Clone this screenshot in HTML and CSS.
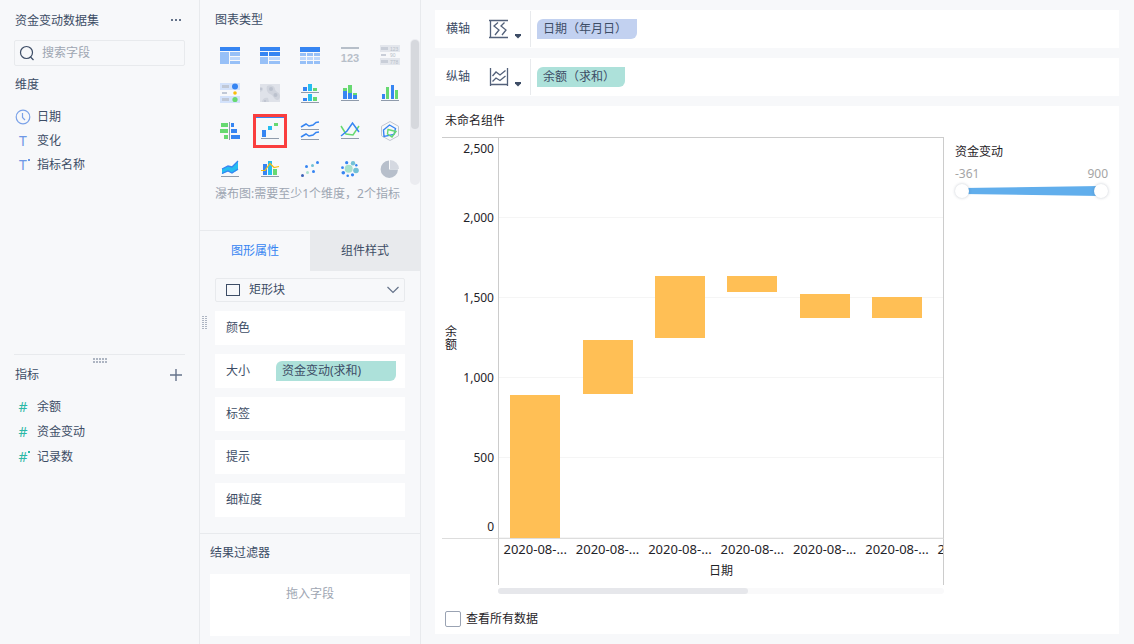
FILE: index.html
```html
<!DOCTYPE html>
<html lang="zh-CN">

<head>
    <meta charset="UTF-8">
    <meta name="viewport" content="width=device-width, initial-scale=1.0">
    <title>未命名组件</title>
    <link rel="stylesheet" href="styles.css">
</head>

<body>

    <!-- 左侧字段面板 -->
    <aside class="fields-panel">
        <section class="dimension-area">
            <div class="panel-head">
                <h2>资金变动数据集</h2>
                <button class="icon-btn" aria-label="更多">
                    <svg width="12" height="12" viewBox="0 0 12 12" fill="#65738a">
                        <rect x="1" y="4" width="2" height="2" />
                        <rect x="5" y="4" width="2" height="2" />
                        <rect x="9" y="4" width="2" height="2" />
                    </svg>
                </button>
            </div>
            <label class="search-box">
                <svg width="16" height="16" viewBox="0 0 16 16" fill="none" stroke="#3d4d66" stroke-width="1.2">
                    <circle cx="7.5" cy="7.5" r="6" />
                    <path d="M11.5 12l3 3" />
                </svg>
                <input type="text" placeholder="搜索字段" aria-label="搜索字段">
            </label>
            <h3>维度</h3>
            <ul class="field-list">
                <li>
                    <svg width="16" height="16" viewBox="0 0 16 16" fill="none" stroke="#7ba2e8" stroke-width="1.2">
                        <circle cx="8" cy="8" r="6.8" />
                        <path d="M7.5 4v4.5l2.500 2.500" />
                    </svg>
                    日期
                </li>
                <li><span class="type-mark">T</span>变化</li>
                <li><span class="type-mark dotted">T</span>指标名称</li>
            </ul>
        </section>

        <section class="measure-area">
            <svg class="grip-h" width="14" height="5" viewBox="0 0 14 5" stroke="#65738a" stroke-dasharray="2 1">
                <path d="M0 1h14M0 4h14" />
            </svg>
            <div class="panel-head">
                <h2>指标</h2>
                <button class="icon-btn" aria-label="添加指标">
                    <svg width="12" height="12" viewBox="0 0 12 12" stroke="#65738a" stroke-width="1.4">
                        <path d="M0 6h12M6 0v12" />
                    </svg>
                </button>
            </div>
            <ul class="field-list measures">
                <li><span class="type-mark">#</span>余额</li>
                <li><span class="type-mark">#</span>资金变动</li>
                <li><span class="type-mark dotted">#</span>记录数</li>
            </ul>
        </section>
    </aside>

    <!-- 中间配置面板 -->
    <section class="config-panel">
        <div class="chart-types">
            <h2>图表类型</h2>
            <div class="type-scroll">
                <div class="type-grid">
                    <button aria-label="分组表">
                        <svg viewBox="0 0 20 20">
                            <path fill="#3685f2" d="M0 2h20v4H0z" />
                            <path fill="#97c0f7" d="M0 7h9v12H0zM10 7h10v4H10zM10 16h10v3H10z" />
                            <path fill="#bdd7fb" d="M10 12h10v3H10z" />
                        </svg>
                    </button>
                    <button aria-label="交叉表">
                        <svg viewBox="0 0 20 20">
                            <path fill="#3685f2" d="M0 2h20v4H0zM0 7h8v4H0zM9 7h11v4H9z" />
                            <path fill="#97c0f7" d="M0 12h8v7H0zM9 16h11v3H9z" />
                            <path fill="#bdd7fb" d="M9 12h11v3H9z" />
                        </svg>
                    </button>
                    <button aria-label="明细表">
                        <svg viewBox="0 0 20 20">
                            <path fill="#3685f2" d="M0 2h20v5H0z" />
                            <path fill="#97c0f7" d="M0 8h6v3H0zM7 8h6v3H7zM14 8h6v3h-6zM0 16h6v3H0zM7 16h6v3H7zM14 16h6v3h-6z" />
                            <path fill="#bdd7fb" d="M0 12h6v3H0zM7 12h6v3H7zM14 12h6v3h-6z" />
                        </svg>
                    </button>
                    <button aria-label="KPI指标卡">
                        <svg viewBox="0 0 20 20">
                            <path fill="#b7bfc9" d="M1 2h18v2H1z" />
                            <text class="kpi-text" x="10" y="17" text-anchor="middle">123</text>
                        </svg>
                    </button>
                    <button aria-label="颜色表格">
                        <svg viewBox="0 0 20 20">
                            <path fill="#e3e6ec" d="M0 0h20v7H0zM0 13h20v7H0z" />
                            <path fill="#c9ced8" d="M1 2h7v3H1zM1 9h5v2H1zM1 15h7v3H1z" />
                            <text class="tiny-text" x="10" y="6">123</text>
                            <text class="tiny-text" x="10" y="12">90</text>
                            <text class="tiny-text" x="10" y="19">778</text>
                        </svg>
                    </button>

                    <button aria-label="图标表格">
                        <svg viewBox="0 0 20 20">
                            <path fill="#d3e2fb" d="M0 0h20v7H0zM0 13h20v7H0z" />
                            <path fill="#c0c8d6" d="M2 2h7v3H2zM2 9h5v2H2zM2 15h7v3H2z" />
                            <circle cx="15" cy="3.500" r="3" fill="#3685f2" />
                            <circle cx="15" cy="10" r="1.800" fill="#f9bc0c" />
                            <circle cx="15" cy="16.500" r="2.600" fill="#67d971" />
                        </svg>
                    </button>
                    <button aria-label="热力区域图">
                        <svg viewBox="0 0 20 20">
                            <path fill="#dfe2e9" d="M0 1h20v18H0z" />
                            <g fill="#d0d4dd">
                                <path d="M7 3c3-2 8 0 8 3s5 3 5 7-3 5-5 3-2-4-5-5-4-5-3-8z" />
                                <path d="M0 4c3 0 4 2 2 4L0 9zM2 19c0-3 3-5 6-4l1 4z" />
                            </g>
                            <g fill="#bcc2ce">
                                <circle cx="11" cy="6" r="2" />
                                <circle cx="15.500" cy="12" r="2" />
                                <circle cx="5" cy="18" r="1" />
                                <circle cx="1" cy="6" r="1" />
                            </g>
                        </svg>
                    </button>
                    <button aria-label="分区柱形图">
                        <svg viewBox="0 0 20 20">
                            <path fill="#3685f2" d="M3 4h4v4H3zM3 15h4v3H3z" />
                            <path fill="#25bdf0" d="M8 1h4v7H8zM8 11h4v7H8z" />
                            <path fill="#67d971" d="M13 5h4v3h-4zM13 14h4v4h-4z" />
                            <path fill="#8f9bab" d="M1 9h18v1H1zM1 19h18v1H1z" />
                        </svg>
                    </button>
                    <button aria-label="堆积柱形图">
                        <svg viewBox="0 0 20 20">
                            <path fill="#67d971" d="M3 5h4v3H3zM8 2h4v8H8zM13 10h4v2h-4z" />
                            <path fill="#3685f2" d="M3 8h4v8H3zM8 10h4v6H8zM13 12h4v4h-4z" />
                            <path fill="#8f9bab" d="M1 17h18v1H1z" />
                        </svg>
                    </button>
                    <button aria-label="多系列柱形图">
                        <svg viewBox="0 0 20 20">
                            <path fill="#3685f2" d="M2 11h3v5H2zM11 2h3v14h-3z" />
                            <path fill="#67d971" d="M6 4h3v12H6zM15 7h3v9h-3z" />
                            <path fill="#8f9bab" d="M1 17h18v1H1z" />
                        </svg>
                    </button>

                    <button aria-label="对比柱状图">
                        <svg viewBox="0 0 20 20">
                            <path fill="#67d971" d="M1 2h7v4H1zM0 8h8v4H0zM4 14h4v4H4z" />
                            <path fill="#3685f2" d="M11 2h3v4h-3zM11 8h6v4h-6zM11 14h9v4h-9z" />
                            <path fill="#8f9bab" d="M9 1h1v18H9z" />
                        </svg>
                    </button>
                    <button class="active" aria-label="瀑布图">
                        <svg viewBox="0 0 20 20">
                            <path fill="#3685f2" d="M2 9h4v7H2z" />
                            <path fill="#25bdf0" d="M8 5h4v4H8z" />
                            <path fill="#67d971" d="M14 2h4v3h-4z" />
                            <path fill="#8f9bab" d="M1 17h18v1H1z" />
                        </svg>
                    </button>
                    <button aria-label="分区折线图">
                        <svg viewBox="0 0 20 20">
                            <path fill="none" stroke="#3685f2" stroke-width="1.500" d="M1 6l5-3 3 2 4-1 3-2.500 3-.500M1 16l5-3 3 2 4-1 3-2.500 3-.500" />
                            <path fill="#8f9bab" d="M1 8h18v1H1zM1 18h18v1H1z" />
                        </svg>
                    </button>
                    <button aria-label="多系列折线图">
                        <svg viewBox="0 0 20 20">
                            <path fill="none" stroke="#67d971" stroke-width="1.500" d="M1 5l5 8 7 1 6-9" />
                            <path fill="none" stroke="#3685f2" stroke-width="1.500" d="M1 15l6-5 5.500-8L19 11" />
                            <path fill="#8f9bab" d="M1 17h18v1H1z" />
                        </svg>
                    </button>
                    <button aria-label="雷达图">
                        <svg viewBox="0 0 20 20" fill="none">
                            <path stroke="#c0c6d0" d="M10 .5l8.500 4.800v9.500L10 19.500l-8.500-4.700V5.300z" />
                            <path stroke="#3685f2" stroke-width="1.400" d="M9.500 4l6 3.500-1.500 6-10 2L3.500 9z" />
                            <path stroke="#67d971" stroke-width="1.400" d="M8 8.500l8 2-4 5.500-4.500-3z" />
                        </svg>
                    </button>

                    <button aria-label="面积图">
                        <svg viewBox="0 0 20 20">
                            <path fill="#25bdf0" d="M2 10l6-3 4 1 6-6v9l-6 3-4-2-6 3z" />
                            <path fill="none" stroke="#3685f2" stroke-width="1.300" d="M2 10l6-3 4 1 6-6M2 14.500l6-2.500 4 2 6-4" />
                            <path fill="#8f9bab" d="M1 17h18v1H1z" />
                        </svg>
                    </button>
                    <button aria-label="组合图">
                        <svg viewBox="0 0 20 20">
                            <path fill="#3685f2" d="M3 5h4v11H3z" />
                            <path fill="#25bdf0" d="M8 2h4v14H8z" />
                            <path fill="#67d971" d="M13 10h4v6h-4z" />
                            <path fill="none" stroke="#f9bc0c" stroke-width="1.200" d="M1 11.500l4 0 5-7 4 4 5-1" />
                            <path fill="#8f9bab" d="M1 17h18v1H1z" />
                        </svg>
                    </button>
                    <button aria-label="散点图">
                        <svg viewBox="0 0 20 20">
                            <g fill="#3685f2">
                                <circle cx="17.500" cy="3.500" r="1.500" />
                                <circle cx="6.500" cy="7.500" r="1.500" />
                                <circle cx="13.500" cy="12.500" r="1.500" />
                            </g>
                            <circle cx="12.500" cy="6.500" r="1.500" fill="#72c1d6" />
                            <circle cx="7.500" cy="13.500" r="1.500" fill="#a8e0cc" />
                            <circle cx="2.500" cy="16.500" r="1.500" fill="#3c62b8" />
                        </svg>
                    </button>
                    <button aria-label="聚合气泡图">
                        <svg viewBox="0 0 20 20">
                            <circle cx="8.700" cy="9.700" r="4" fill="#a8e0cc" />
                            <g fill="#72c1d6">
                                <circle cx="13" cy="4.200" r="2.200" />
                                <circle cx="16" cy="11.500" r="2.800" />
                            </g>
                            <g fill="#3685f2">
                                <circle cx="6.700" cy="3.700" r="1.600" />
                                <circle cx="16.300" cy="6.300" r="1.200" />
                                <circle cx="2.500" cy="8.700" r="1.400" />
                                <circle cx="3.300" cy="13.700" r="1.800" />
                                <circle cx="7.700" cy="16.700" r="1.300" />
                                <circle cx="12.500" cy="15.800" r="1.600" />
                            </g>
                        </svg>
                    </button>
                    <button aria-label="饼图">
                        <svg viewBox="0 0 20 20">
                            <path fill="#b7bfcb" d="M9 1.500a8.700 8.700 0 1 0 9 9H9z" />
                            <path fill="#d5d9e1" d="M10 1v9h9a9 9 0 0 0-9-9z" />
                        </svg>
                    </button>
                </div>
                <div class="v-scroll"><div class="v-thumb"></div></div>
            </div>
            <p class="type-tip">瀑布图:需要至少1个维度，2个指标</p>
        </div>

        <div class="properties">
            <div class="tabs">
                <button class="tab current">图形属性</button>
                <button class="tab">组件样式</button>
            </div>
            <svg class="grip-v" width="5" height="13" viewBox="0 0 5 13" stroke="#65738a" stroke-dasharray="1 1">
                <path d="M1 0v13M4 0v13" />
            </svg>
            <div class="property-list">
                <label class="shape-select">
                    <svg width="16" height="14" viewBox="0 0 16 14" fill="none" stroke="#3d4d66">
                        <rect x="1.500" y="1.500" width="13" height="11" />
                    </svg>
                    <select aria-label="图形">
                        <option>矩形块</option>
                    </select>
                    <svg class="chevron" width="12" height="8" viewBox="0 0 12 8" fill="none" stroke="#65738a" stroke-width="1.200">
                        <path d="M.5 1L6 6.500 11.500 1" />
                    </svg>
                </label>
                <div class="property">颜色</div>
                <div class="property">大小<span class="pill measure wide">资金变动(求和)</span></div>
                <div class="property">标签</div>
                <div class="property">提示</div>
                <div class="property">细粒度</div>
            </div>
        </div>

        <div class="result-filter">
            <h2>结果过滤器</h2>
            <div class="drop-zone">拖入字段</div>
        </div>
    </section>

    <!-- 右侧图表区 -->
    <main class="workspace">
        <div class="axis-row">
            <span class="axis-name">横轴</span>
            <button class="axis-btn" aria-label="横轴设置">
                <svg width="20" height="20" viewBox="0 0 20 20" fill="none" stroke="#53617a" stroke-width="1.300">
                    <path d="M0 1.500h19M0 18.500h19M1.500 1v18" />
                    <path d="M9 3.500L5 7l5 4-4 5M15.500 3.500L12 7l5 4-4 5" />
                </svg>
                <svg width="8" height="5" viewBox="0 0 8 5" fill="#3d4d66"><path d="M1 0h6v1.500L4 4.500 1 1.500z" /></svg>
            </button>
            <div class="axis-fields"><span class="pill dimension">日期（年月日）</span></div>
        </div>
        <div class="axis-row">
            <span class="axis-name">纵轴</span>
            <button class="axis-btn" aria-label="纵轴设置">
                <svg width="20" height="20" viewBox="0 0 20 20" fill="none" stroke="#53617a" stroke-width="1.300">
                    <path d="M1.500 1v18M18.500 1v18M1 17.500h18" />
                    <path d="M3.500 9L7 5l4 3 5.500-4.500M3.500 14.500L7 11l4 2.500L16.500 9" />
                </svg>
                <svg width="8" height="5" viewBox="0 0 8 5" fill="#3d4d66"><path d="M1 0h6v1.500L4 4.500 1 1.500z" /></svg>
            </button>
            <div class="axis-fields"><span class="pill measure">余额（求和）</span></div>
        </div>

        <section class="component">
            <h1>未命名组件</h1>
            <div class="component-body">
                <div class="chart">
                    <div class="y-axis">
                        <span class="y-title">余额</span>
                        <div class="y-labels">
                            <span>2,500</span>
                            <span>2,000</span>
                            <span>1,500</span>
                            <span>1,000</span>
                            <span>500</span>
                            <span>0</span>
                        </div>
                    </div>
                    <!-- 每列三段：上方空白 / 柱体 / 下方空白 -->
                    <div class="plot">
                        <div class="column" style="grid-template-rows: 1606fr 894fr 0fr"><div class="bar"></div></div>
                        <div class="column" style="grid-template-rows: 1262fr 338fr 900fr"><div class="bar"></div></div>
                        <div class="column" style="grid-template-rows: 862fr 388fr 1250fr"><div class="bar"></div></div>
                        <div class="column" style="grid-template-rows: 862fr 100fr 1538fr"><div class="bar"></div></div>
                        <div class="column" style="grid-template-rows: 975fr 150fr 1375fr"><div class="bar"></div></div>
                        <div class="column" style="grid-template-rows: 994fr 131fr 1375fr"><div class="bar"></div></div>
                    </div>
                    <div class="axis-corner"></div>
                    <div class="x-axis">
                        <div class="x-labels">
                            <span>2020-08-...</span>
                            <span>2020-08-...</span>
                            <span>2020-08-...</span>
                            <span>2020-08-...</span>
                            <span>2020-08-...</span>
                            <span>2020-08-...</span>
                            <span>2020-08-...</span>
                        </div>
                        <div class="x-title">日期</div>
                    </div>
                    <div class="h-scroll"><div class="h-thumb"></div></div>
                </div>

                <div class="legend">
                    <div class="legend-title">资金变动</div>
                    <div class="legend-range"><span>-361</span><span>900</span></div>
                    <div class="range-slider">
                        <div class="range-track"></div>
                        <input type="range" min="-361" max="900" value="-361" aria-label="资金变动最小值">
                        <input type="range" min="-361" max="900" value="900" step="any" aria-label="资金变动最大值">
                    </div>
                </div>
            </div>
            <label class="view-all"><input type="checkbox">查看所有数据</label>
        </section>
    </main>

</body>

</html>
```
FILE: styles.css
```css
/* 通用样式 */
* {
    box-sizing: border-box;
}

body,
html {
    margin: 0;
    padding: 0;
    height: 100%;
}

body {
    display: flex;
    background-color: #f7f8fa;
    color: #3d4d66;
    font-family: "Noto Sans", "Noto Sans CJK SC", sans-serif;
    font-size: 12px;
    line-height: 22px;
}

h1,
h2,
h3,
p,
ul {
    margin: 0;
    padding: 0;
    font-size: 12px;
    font-weight: normal;
}

button,
input,
select {
    margin: 0;
    padding: 0;
    border: none;
    background: none;
    color: inherit;
    font: inherit;
}

button {
    cursor: pointer;
}

svg {
    display: block;
    flex: none;
}

/* 左侧字段面板 */
.fields-panel {
    display: flex;
    flex-direction: column;
    flex: none;
    width: 200px;
    padding: 0 14px;
    border-right: 1px solid #e8eaed;
}

.dimension-area {
    flex: 0 0 55%;
    padding-top: 10px;
}

.panel-head {
    display: flex;
    align-items: center;
    justify-content: space-between;
    padding: 0 3px 0 1px;
}

.icon-btn {
    display: flex;
}

.search-box {
    display: flex;
    align-items: center;
    gap: 7px;
    height: 26px;
    margin: 8px 0;
    padding: 0 4px;
    border: 1px solid #e8eaed;
    border-radius: 2px;
}

.search-box input {
    flex: 1;
    min-width: 0;
    outline: none;
}

.search-box input::placeholder {
    color: #9ea6b2;
}

.dimension-area h3 {
    padding-left: 1px;
}

.field-list {
    margin-top: 9px;
    padding-left: 1px;
    list-style: none;
}

.field-list li {
    display: flex;
    align-items: center;
    gap: 6px;
    height: 24px;
}

.field-list.measures {
    margin-top: 8px;
}

.field-list.measures li {
    height: 25px;
}

.type-mark {
    position: relative;
    width: 16px;
    text-align: center;
    font-size: 14px;
    color: #6d97e6;
}

.measures .type-mark {
    color: #2cb8a6;
}

/* 类型标记右上角的小点 */
.type-mark.dotted::after {
    content: "";
    position: absolute;
    top: 5px;
    right: 1px;
    width: 2px;
    height: 2px;
    background-color: currentColor;
}

.measure-area {
    position: relative;
    flex: 1;
    padding-top: 9px;
    border-top: 1px solid #e8eaed;
}

.grip-h {
    position: absolute;
    top: 3px;
    left: calc(50% - 7px);
}

/* 中间配置面板 */
.config-panel {
    display: flex;
    flex-direction: column;
    flex: none;
    width: 221px;
    border-right: 1px solid #e8eaed;
}

.chart-types {
    padding: 9px 0 27px 15px;
    border-bottom: 1px solid #e8eaed;
}

.type-scroll {
    display: flex;
    justify-content: space-between;
    margin-top: 8px;
}

.type-grid {
    display: grid;
    grid-template-columns: repeat(5, 30px);
    gap: 8px 10px;
    padding: 1px 0;
}

.type-grid button {
    display: flex;
    align-items: center;
    justify-content: center;
    height: 30px;
}

.type-grid svg {
    width: 20px;
    height: 20px;
}

.type-grid .active {
    box-shadow: inset 0 2px #3685f2;
    outline: 3px solid #fa3e3e;
    outline-offset: -1px;
}

.kpi-text {
    font-family: "Liberation Sans Narrow", "Liberation Sans", sans-serif;
    font-size: 11px;
    font-weight: bold;
    fill: #b7bfc9;
}

.tiny-text {
    font-family: "Liberation Sans", sans-serif;
    font-size: 5px;
    fill: #b7bfc9;
}

.v-scroll {
    width: 10px;
    padding: 1px;
    border-radius: 5px;
    background-color: #ebecf0;
}

.v-thumb {
    height: 62%;
    border-radius: 4px;
    background-color: #d6d8dd;
}

.type-tip {
    line-height: 18px;
    color: #9ea6b2;
    white-space: nowrap;
}

/* 属性区 */
.properties {
    position: relative;
    flex: 1;
}

.tabs {
    display: flex;
}

.tab {
    flex: 1;
    height: 40px;
    background-color: #e8eaed;
}

.tab.current {
    background-color: transparent;
    color: #3685f2;
}

.grip-v {
    position: absolute;
    top: 85px;
    left: 2px;
}

.property-list {
    display: flex;
    flex-direction: column;
    gap: 9px;
    padding: 7px 15px 0;
}

.shape-select {
    display: flex;
    align-items: center;
    gap: 8px;
    height: 24px;
    padding: 0 5px 0 9px;
    border: 1px solid #e8eaed;
    border-radius: 2px;
}

.shape-select select {
    flex: 1;
    appearance: none;
    outline: none;
}

.chevron {
    pointer-events: none;
}

.property {
    display: flex;
    align-items: center;
    justify-content: space-between;
    height: 34px;
    padding: 0 9px 0 11px;
    background-color: #fff;
}

/* 字段标签 */
.pill {
    display: block;
    height: 20px;
    padding: 0 10px 0 6px;
    border-radius: 6px 0;
    line-height: 20px;
    white-space: nowrap;
}

.pill.wide {
    width: 120px;
}

.pill.dimension {
    background-color: #c2d1f0;
}

.pill.measure {
    background-color: #ade1da;
}

.result-filter {
    padding: 8px 10px;
    border-top: 1px solid #e8eaed;
}

.drop-zone {
    height: 62px;
    margin-top: 10px;
    padding-top: 9px;
    background-color: #fff;
    color: #9ea6b2;
    text-align: center;
}

/* 右侧图表区 */
.workspace {
    display: flex;
    flex-direction: column;
    flex: 1;
    gap: 10px;
    min-width: 0;
    padding: 10px 15px 10px 14px;
}

.axis-row {
    display: flex;
    align-items: center;
    height: 38px;
    padding-left: 11px;
    background-color: #fff;
}

.axis-name {
    width: 43px;
}

.axis-btn {
    display: flex;
    align-items: flex-end;
    gap: 5px;
    width: 41px;
}

.axis-fields {
    display: flex;
    align-items: center;
    height: 36px;
    padding-left: 6px;
    border-left: 1px solid #e8eaed;
}

.component {
    display: flex;
    flex-direction: column;
    flex: 1;
    background-color: #fff;
    color: #1f2328;
}

.component h1 {
    padding: 4px 10px 5px;
}

.component-body {
    display: flex;
    flex: 1;
    gap: 11px;
    padding: 0 11px 0 7px;
}

/* 瀑布图 */
.chart {
    display: grid;
    grid-template-columns: 56px minmax(0, 1fr);
    grid-template-rows: 1fr 47px 9px;
    flex: 1;
    border-top: 1px solid #ccc;
}

.y-axis {
    display: flex;
    align-items: center;
    justify-content: space-between;
    padding: 0 4px 0 3px;
}

.y-title {
    width: 12px;
    line-height: 13px;
}

.y-labels {
    display: grid;
    grid-template-rows: 1fr 2fr 2fr 2fr 2fr 1fr;
    align-items: center;
    align-self: stretch;
    text-align: right;
}

.y-labels span:first-child {
    align-self: start;
}

.y-labels span:last-child {
    align-self: end;
}

.plot,
.x-axis {
    border: solid #ccc;
    border-width: 0 1px;
    overflow: hidden;
}

.plot,
.x-labels {
    display: grid;
    grid-auto-flow: column;
    grid-auto-columns: 16.3%;
}

.plot {
    background: linear-gradient(to top, #f5f5f5 1px, transparent 1px) 0 0 / 100% 20%;
}

.column {
    display: grid;
    justify-content: center;
}

.bar {
    grid-row: 2;
    width: 50px;
    background-color: #ffbf55;
}

.axis-corner {
    border-top: 1px solid #ddd;
}

.x-axis {
    border-top: 1px solid #ddd;
    text-align: center;
}

.x-labels {
    font-size: 13px;
    line-height: 20px;
    white-space: nowrap;
}

.x-title {
    line-height: 24px;
}

.h-scroll {
    grid-column: 2;
    margin-top: 3px;
    border-radius: 3px;
    background-color: #f9f9fa;
}

.h-thumb {
    width: 56%;
    height: 100%;
    border-radius: 3px;
    background-color: #e6e7eb;
}

/* 图例 */
.legend {
    width: 153px;
    padding-top: 4px;
}

.legend-range {
    display: flex;
    justify-content: space-between;
    color: #a5a5a5;
}

.range-slider {
    position: relative;
    display: flex;
    align-items: center;
    height: 14px;
    margin-top: -1px;
    padding: 0 8px;
}

.range-track {
    width: 100%;
    height: 10px;
    background-color: #61aeec;
    clip-path: polygon(0 20%, 100% 0, 100% 100%, 0 80%);
}

/* 两个滑块叠放在同一轨道上 */
.range-slider input {
    position: absolute;
    inset: 0;
    width: 100%;
    appearance: none;
    pointer-events: none;
}

.range-slider input::-webkit-slider-thumb {
    width: 14px;
    height: 14px;
    border-radius: 50%;
    background-color: #fff;
    box-shadow: 0 0 3px rgba(61, 77, 102, 0.3);
    appearance: none;
    pointer-events: auto;
}

.view-all {
    display: flex;
    align-items: center;
    gap: 5px;
    height: 40px;
    padding: 10px 10px 0;
}

.view-all input {
    width: 16px;
    height: 16px;
    border: 1px solid #9aa3b3;
    border-radius: 2px;
    background-color: #fff;
    appearance: none;
}

.view-all input:checked {
    background-color: #3685f2;
}
```
